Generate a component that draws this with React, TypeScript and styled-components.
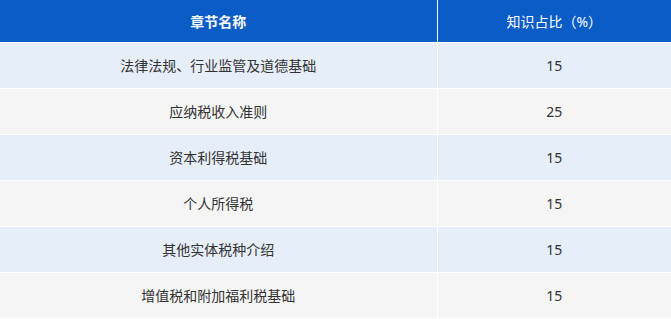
import React from 'react'
import styled, { createGlobalStyle } from 'styled-components'

const GlobalStyle = createGlobalStyle`
  html, body {
    margin: 0;
    padding: 0;
    background: #ffffff;
  }
  body {
    font-family: "Noto Sans", "Noto Sans CJK SC", sans-serif;
  }
`

interface Chapter {
  name: string;
  ratio: number;
}

const chapters: Chapter[] = [
  { name: '法律法规、行业监管及道德基础', ratio: 15 },
  { name: '应纳税收入准则', ratio: 25 },
  { name: '资本利得税基础', ratio: 15 },
  { name: '个人所得税', ratio: 15 },
  { name: '其他实体税种介绍', ratio: 15 },
  { name: '增值税和附加福利税基础', ratio: 15 },
]

const App: React.FC = () => {
  return (
    <>
      <GlobalStyle />
      <StyledTable>
        <colgroup>
          <col style={{ width: 437 }} />
          <col />
        </colgroup>
        <thead>
          <tr>
            <HeadCell bold>章节名称</HeadCell>
            <HeadCell>知识占比（%）</HeadCell>
          </tr>
        </thead>
        <tbody>
          {chapters.map((chapter, i) => (
            <Row key={chapter.name} striped={i % 2 === 0}>
              <Cell>{chapter.name}</Cell>
              <Cell>{chapter.ratio}</Cell>
            </Row>
          ))}
        </tbody>
      </StyledTable>
    </>
  )
}

const StyledTable = styled.table`
  width: 671px;
  border-collapse: collapse;
  table-layout: fixed;
`
const HeadCell = styled.th<{ bold?: boolean }>`
  height: 42px;
  padding: 0;
  background: #0a5cc6;
  color: #ffffff;
  font-size: 14px;
  font-weight: ${({ bold }) => (bold ? 700 : 400)};
  text-align: center;
  vertical-align: middle;
  border-right: 1px solid #ffffff;
  border-bottom: 1px solid #ffffff;
  box-sizing: border-box;
  &:last-child {
    border-right: none;
  }
`
const Row = styled.tr<{ striped?: boolean }>`
  background: ${({ striped }) => (striped ? '#e6eef9' : '#f5f5f5')};
`
const Cell = styled.td`
  height: 45px;
  padding: 0;
  color: #333333;
  font-size: 14px;
  text-align: center;
  vertical-align: middle;
  border-right: 1px solid #ffffff;
  border-bottom: 1px solid #ffffff;
  &:last-child {
    border-right: none;
  }
`

export default App
